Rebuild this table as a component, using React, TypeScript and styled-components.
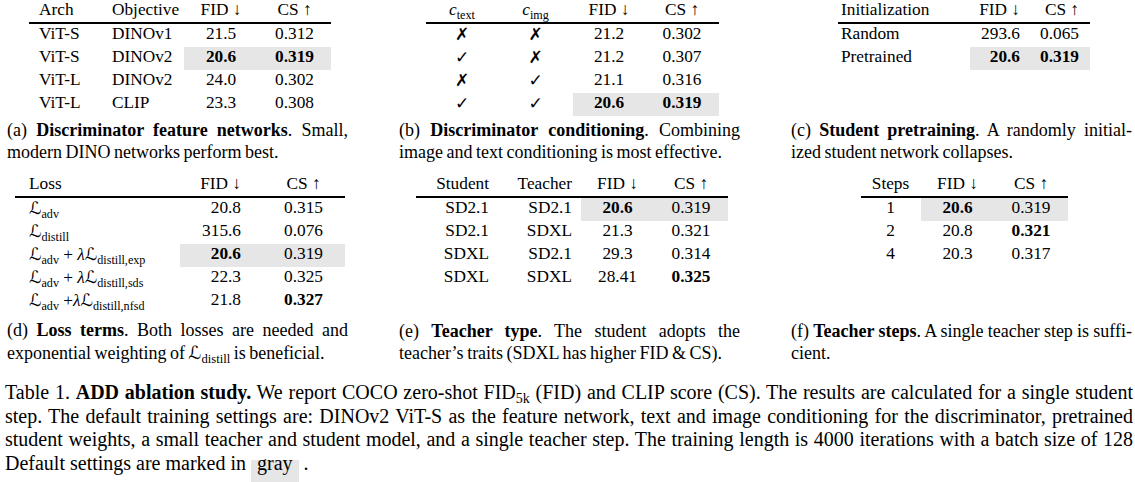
import React from "react";
import styled, { createGlobalStyle } from "styled-components";

const GlobalStyle = createGlobalStyle`
  html, body {
    margin: 0;
    padding: 0;
    background: #fff;
  }
  body {
    font-family: "Liberation Serif", "Times New Roman", serif;
    color: #000;
  }
`;

const Page = styled.div`
  width: 1135px;
  height: 482px;
  overflow: hidden;
`;

const Figure = styled.div`
  display: grid;
  grid-template-columns: repeat(3, 341px);
  column-gap: 51px;
  row-gap: 11px;
  padding-left: 7px;
`;

const SubFigure = styled.div<{ $gap: number }>`
  display: flex;
  flex-direction: column;
  justify-content: space-between;
  gap: ${(p) => p.$gap}px;
`;

const TableWrap = styled.div`
  display: flex;
  justify-content: center;
  padding-left: 5px;
`;

const Table = styled.table<{ $w: number }>`
  width: ${(p) => p.$w}px;
  border-collapse: separate;
  border-spacing: 0;
  table-layout: fixed;
  font-size: 17.3px;
  line-height: 20px;
`;

type Align = "left" | "center" | "right";

const HeadCell = styled.th<{ $w: number; $align: Align; $pl: number; $pr: number }>`
  width: ${(p) => p.$w}px;
  height: 22px;
  padding: 0 ${(p) => p.$pr}px 0 ${(p) => p.$pl}px;
  text-align: ${(p) => p.$align};
  vertical-align: top;
  font-weight: 400;
  white-space: nowrap;
  border-bottom: 2px solid #000;
`;

const Cell = styled.td<{
  $w: number;
  $align: Align;
  $pl: number;
  $pr: number;
  $hl: boolean;
  $bold: boolean;
}>`
  width: ${(p) => p.$w}px;
  height: 23px;
  padding: 0 ${(p) => p.$pr}px 0 ${(p) => p.$pl}px;
  text-align: ${(p) => p.$align};
  vertical-align: top;
  white-space: nowrap;
  font-weight: ${(p) => (p.$bold ? 700 : 400)};
  background: ${(p) => (p.$hl ? "#e6e6e6" : "transparent")};
`;

const Sb = styled.sub`
  font-size: 0.7em;
  vertical-align: -0.3em;
  line-height: 0;
  font-style: normal;
  font-weight: 400;
`;

const Var = styled.i`
  font-style: italic;
`;

const Script = styled.span`
  font-family: "DejaVu Serif", "DejaVu Sans", serif;
  font-style: italic;
`;

const Mark = styled.span`
  font-family: "DejaVu Sans", sans-serif;
  font-size: 17px;
  font-weight: 700;
`;

const Caption = styled.div`
  font-size: 18px;
  line-height: 21.5px;
  word-spacing: -1px;
`;

const Line = styled.div<{ $last?: boolean }>`
  text-align: ${(p) => (p.$last ? "left" : "justify")};
  text-align-last: ${(p) => (p.$last ? "left" : "justify")};
`;

const MainCaption = styled.div`
  margin: 17px 0 0 5px;
  width: 1128px;
  font-size: 20px;
  line-height: 23.5px;
`;

const GrayBox = styled.span`
  display: inline-block;
  background: #e6e6e6;
  line-height: 6.5px;
  padding: 0 6px 18px;
`;

interface Col {
  w: number;
  align: Align;
  pl?: number;
  pr?: number;
}

interface Row {
  cells: React.ReactNode[];
  hl?: number;
  bold?: number[];
}

interface Spec {
  cols: Col[];
  head: React.ReactNode[];
  rows: Row[];
}

function Ablation({ spec }: { spec: Spec }) {
  const total = spec.cols.reduce((s, c) => s + c.w, 0);
  const inner = (c: Col) => c.w - (c.pl ?? 0) - (c.pr ?? 0);
  return (
    <TableWrap>
      <Table $w={total}>
        <thead>
          <tr>
            {spec.head.map((h, i) => {
              const c = spec.cols[i];
              return (
                <HeadCell key={i} $w={inner(c)} $align={c.align} $pl={c.pl ?? 0} $pr={c.pr ?? 0}>
                  {h}
                </HeadCell>
              );
            })}
          </tr>
        </thead>
        <tbody>
          {spec.rows.map((r, ri) => (
            <tr key={ri}>
              {r.cells.map((v, i) => {
                const c = spec.cols[i];
                return (
                  <Cell
                    key={i}
                    $w={inner(c)}
                    $align={c.align}
                    $pl={c.pl ?? 0}
                    $pr={c.pr ?? 0}
                    $hl={r.hl !== undefined && i >= r.hl}
                    $bold={!!r.bold && r.bold.includes(i)}
                  >
                    {v}
                  </Cell>
                );
              })}
            </tr>
          ))}
        </tbody>
      </Table>
    </TableWrap>
  );
}

const FID = "FID ↓";
const CS = "CS ↑";
const yes = <Mark>✓</Mark>;
const no = <Mark>✗</Mark>;
const L = (sub: string) => (
  <>
    <Script>ℒ</Script>
    <Sb>{sub}</Sb>
  </>
);

const tableA: Spec = {
  cols: [
    { w: 73, align: "left", pl: 10 },
    { w: 82, align: "left", pl: 10 },
    { w: 74, align: "center" },
    { w: 73, align: "center" },
  ],
  head: ["Arch", "Objective", FID, CS],
  rows: [
    { cells: ["ViT-S", "DINOv1", "21.5", "0.312"] },
    { cells: ["ViT-S", "DINOv2", "20.6", "0.319"], hl: 2, bold: [2, 3] },
    { cells: ["ViT-L", "DINOv2", "24.0", "0.302"] },
    { cells: ["ViT-L", "CLIP", "23.3", "0.308"] },
  ],
};

const tableB: Spec = {
  cols: [
    { w: 73, align: "center" },
    { w: 74, align: "center" },
    { w: 73, align: "center" },
    { w: 73, align: "center" },
  ],
  head: [
    <>
      <Var>c</Var>
      <Sb>text</Sb>
    </>,
    <>
      <Var>c</Var>
      <Sb>img</Sb>
    </>,
    FID,
    CS,
  ],
  rows: [
    { cells: [no, no, "21.2", "0.302"] },
    { cells: [yes, no, "21.2", "0.307"] },
    { cells: [no, yes, "21.1", "0.316"] },
    { cells: [yes, yes, "20.6", "0.319"], hl: 2, bold: [2, 3] },
  ],
};

const tableC: Spec = {
  cols: [
    { w: 132, align: "left", pl: 3 },
    { w: 60, align: "right", pr: 10 },
    { w: 60, align: "right", pr: 11 },
  ],
  head: ["Initialization", FID, CS],
  rows: [
    { cells: ["Random", "293.6", "0.065"] },
    { cells: ["Pretrained", "20.6", "0.319"], hl: 1, bold: [1, 2] },
  ],
};

const tableD: Spec = {
  cols: [
    { w: 165, align: "left", pl: 14 },
    { w: 82, align: "right", pr: 21 },
    { w: 83, align: "center" },
  ],
  head: ["Loss", FID, CS],
  rows: [
    { cells: [L("adv"), "20.8", "0.315"] },
    { cells: [L("distill"), "315.6", "0.076"] },
    {
      cells: [
        <>
          {L("adv")} + <Var>λ</Var>
          {L("distill,exp")}
        </>,
        "20.6",
        "0.319",
      ],
      hl: 1,
      bold: [1],
    },
    {
      cells: [
        <>
          {L("adv")} + <Var>λ</Var>
          {L("distill,sds")}
        </>,
        "22.3",
        "0.325",
      ],
    },
    {
      cells: [
        <>
          {L("adv")} +<Var>λ</Var>
          {L("distill,nfsd")}
        </>,
        "21.8",
        "0.327",
      ],
      bold: [2],
    },
  ],
};

const tableE: Spec = {
  cols: [
    { w: 83, align: "right", pr: 10 },
    { w: 82, align: "right", pr: 9 },
    { w: 73, align: "center" },
    { w: 74, align: "center" },
  ],
  head: ["Student", "Teacher", FID, CS],
  rows: [
    { cells: ["SD2.1", "SD2.1", "20.6", "0.319"], hl: 2, bold: [2] },
    { cells: ["SD2.1", "SDXL", "21.3", "0.321"] },
    { cells: ["SDXL", "SD2.1", "29.3", "0.314"] },
    { cells: ["SDXL", "SDXL", "28.41", "0.325"], bold: [3] },
  ],
};

const tableF: Spec = {
  cols: [
    { w: 60, align: "center" },
    { w: 74, align: "center" },
    { w: 73, align: "center" },
  ],
  head: ["Steps", FID, CS],
  rows: [
    { cells: ["1", "20.6", "0.319"], hl: 1, bold: [1] },
    { cells: ["2", "20.8", "0.321"], bold: [2] },
    { cells: ["4", "20.3", "0.317"] },
  ],
};

export default function App() {
  return (
    <Page>
      <GlobalStyle />
      <Figure>
        <SubFigure $gap={4}>
          <Ablation spec={tableA} />
          <Caption>
            <Line>
              (a) <b>Discriminator feature networks</b>. Small,
            </Line>
            <Line $last>modern DINO networks perform best.</Line>
          </Caption>
        </SubFigure>
        <SubFigure $gap={4}>
          <Ablation spec={tableB} />
          <Caption>
            <Line>
              (b) <b>Discriminator conditioning</b>. Combining
            </Line>
            <Line $last>image and text conditioning is most effective.</Line>
          </Caption>
        </SubFigure>
        <SubFigure $gap={4}>
          <Ablation spec={tableC} />
          <Caption>
            <Line>
              (c) <b>Student pretraining</b>. A randomly initial-
            </Line>
            <Line $last>ized student network collapses.</Line>
          </Caption>
        </SubFigure>
        <SubFigure $gap={7}>
          <Ablation spec={tableD} />
          <Caption>
            <Line>
              (d) <b>Loss terms</b>. Both losses are needed and
            </Line>
            <Line $last>exponential weighting of {L("distill")} is beneficial.</Line>
          </Caption>
        </SubFigure>
        <SubFigure $gap={7}>
          <Ablation spec={tableE} />
          <Caption>
            <Line>
              (e) <b>Teacher type</b>. The student adopts the
            </Line>
            <Line $last>teacher’s traits (SDXL has higher FID &amp; CS).</Line>
          </Caption>
        </SubFigure>
        <SubFigure $gap={7}>
          <Ablation spec={tableF} />
          <Caption>
            <Line>
              (f) <b>Teacher steps</b>. A single teacher step is suffi-
            </Line>
            <Line $last>cient.</Line>
          </Caption>
        </SubFigure>
      </Figure>
      <MainCaption>
        <Line>
          Table 1. <b>ADD ablation study.</b> We report COCO zero-shot FID<Sb>5k</Sb> (FID) and CLIP score
          (CS). The results are calculated for a single student
        </Line>
        <Line>
          step. The default training settings are: DINOv2 ViT-S as the feature network, text and image
          conditioning for the discriminator, pretrained
        </Line>
        <Line>
          student weights, a small teacher and student model, and a single teacher step. The training length
          is 4000 iterations with a batch size of 128
        </Line>
        <Line $last>
          Default settings are marked in <GrayBox>gray</GrayBox> .
        </Line>
      </MainCaption>
    </Page>
  );
}
